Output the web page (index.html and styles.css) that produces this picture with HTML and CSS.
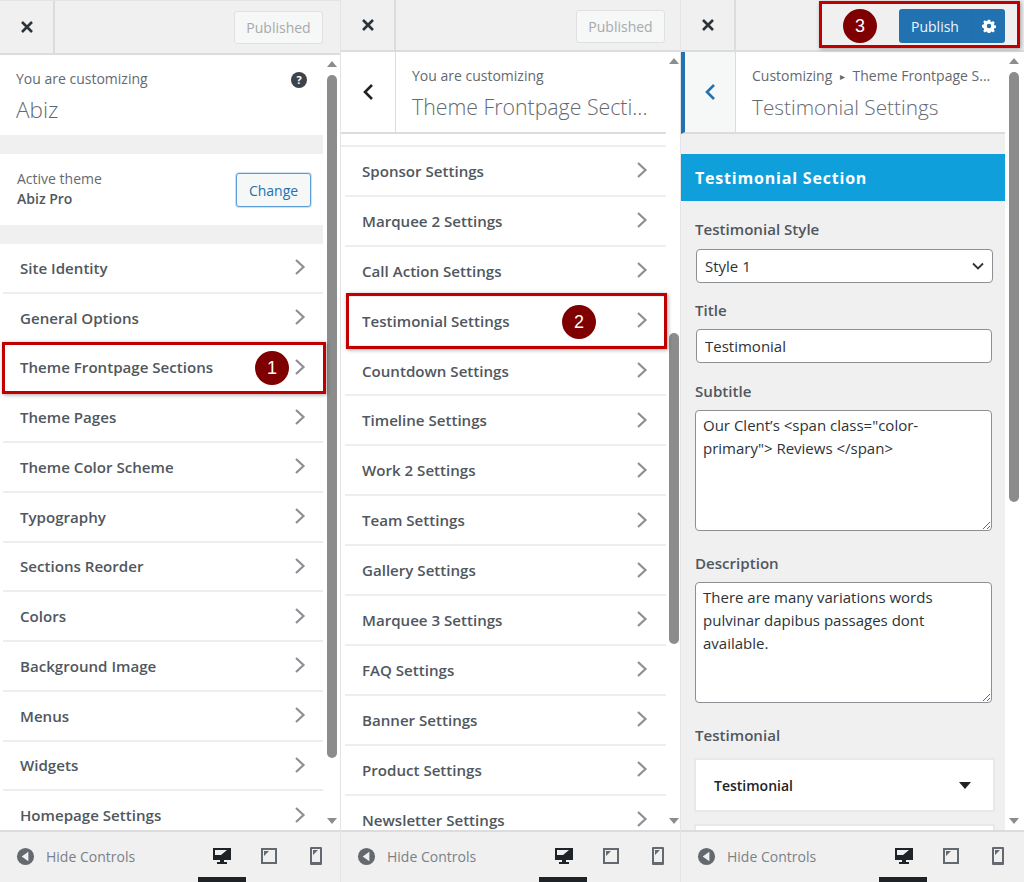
FILE: index.html
```html
<!DOCTYPE html>
<html lang="en">
<head>
<meta charset="utf-8">
<title>Customizer steps</title>
<link rel="stylesheet" href="styles.css">
</head>
<body>
<svg class="defs" width="0" height="0" aria-hidden="true">
  <symbol id="chev" viewBox="0 0 12 18"><path d="M2 2l7.5 7L2 16" fill="none" stroke="currentColor" stroke-width="2.2"/></symbol>
  <symbol id="close" viewBox="0 0 14 14"><path d="M2 2l10 10M12 2L2 12" fill="none" stroke="currentColor" stroke-width="2.6"/></symbol>
  <symbol id="back" viewBox="0 0 12 18"><path d="M10 2L3 9l7 7" fill="none" stroke="currentColor" stroke-width="2.6"/></symbol>
  <symbol id="hide" viewBox="0 0 20 20"><circle cx="10" cy="10" r="9" fill="#646970"/><path d="M13 5v10L6 10z" fill="#f0f0f1"/></symbol>
  <symbol id="desk" viewBox="0 0 20 20"><path d="M1 2h18v12h-7v2h3v2H5v-2h3v-2H1zM3 4v5h6l6-5z" fill="#1d2327" fill-rule="evenodd"/></symbol>
  <symbol id="tablet" viewBox="0 0 20 20"><path d="M2 2h16v16H2zM4 4v12h12V4zM5 5h5l-5 5z" fill="#646970" fill-rule="evenodd"/></symbol>
  <symbol id="phone" viewBox="0 0 20 20"><path d="M5 1h10a1 1 0 0 1 1 1v16a1 1 0 0 1-1 1H5a1 1 0 0 1-1-1V2a1 1 0 0 1 1-1zM6 3v13h8V3zM7 4h5l-5 5z" fill="#646970" fill-rule="evenodd"/></symbol>
</svg>

<main class="shot">
  <section class="panel p1">
    <header class="top">
      <div class="close"><svg class="i-close"><use href="#close"/></svg></div>
      <div class="actions"><span class="published">Published</span></div>
    </header>
    <div class="middle">
      <div class="content">
        <div class="info">
          <div>
            <div class="eyebrow">You are customizing</div>
            <div class="big">Abiz</div>
          </div>
          <span class="help">?</span>
        </div>
        <div class="theme">
          <div>
            <div class="theme-label">Active theme</div>
            <div class="theme-name">Abiz Pro</div>
          </div>
          <span class="change">Change</span>
        </div>
        <ul class="rows rows1">
          <li><span>Site Identity</span><svg class="chev"><use href="#chev"/></svg></li>
          <li><span>General Options</span><svg class="chev"><use href="#chev"/></svg></li>
          <li><span>Theme Frontpage Sections</span><svg class="chev"><use href="#chev"/></svg></li>
          <li><span>Theme Pages</span><svg class="chev"><use href="#chev"/></svg></li>
          <li><span>Theme Color Scheme</span><svg class="chev"><use href="#chev"/></svg></li>
          <li><span>Typography</span><svg class="chev"><use href="#chev"/></svg></li>
          <li><span>Sections Reorder</span><svg class="chev"><use href="#chev"/></svg></li>
          <li><span>Colors</span><svg class="chev"><use href="#chev"/></svg></li>
          <li><span>Background Image</span><svg class="chev"><use href="#chev"/></svg></li>
          <li><span>Menus</span><svg class="chev"><use href="#chev"/></svg></li>
          <li><span>Widgets</span><svg class="chev"><use href="#chev"/></svg></li>
          <li><span>Homepage Settings</span><svg class="chev"><use href="#chev"/></svg></li>
        </ul>
      </div>
      <div class="scrollbar"><i class="up"></i><b class="thumb"></b><i class="down"></i></div>
    </div>
    <footer class="foot">
      <svg class="i-hide"><use href="#hide"/></svg><span class="hide-label">Hide Controls</span>
      <div class="devices">
        <svg class="dev on"><use href="#desk"/></svg>
        <svg class="dev"><use href="#tablet"/></svg>
        <svg class="dev"><use href="#phone"/></svg>
      </div>
    </footer>
  </section>

  <section class="panel p2">
    <header class="top">
      <div class="close"><svg class="i-close"><use href="#close"/></svg></div>
      <div class="actions"><span class="published">Published</span></div>
    </header>
    <div class="middle">
      <div class="content">
        <div class="sub-head">
          <div class="back"><svg class="i-back"><use href="#back"/></svg></div>
          <div class="sub-text">
            <div class="eyebrow">You are customizing</div>
            <div class="big">Theme Frontpage Secti...</div>
          </div>
        </div>
        <ul class="rows rows2">
          <li><span>Sponsor Settings</span><svg class="chev"><use href="#chev"/></svg></li>
          <li><span>Marquee 2 Settings</span><svg class="chev"><use href="#chev"/></svg></li>
          <li><span>Call Action Settings</span><svg class="chev"><use href="#chev"/></svg></li>
          <li><span>Testimonial Settings</span><svg class="chev"><use href="#chev"/></svg></li>
          <li><span>Countdown Settings</span><svg class="chev"><use href="#chev"/></svg></li>
          <li><span>Timeline Settings</span><svg class="chev"><use href="#chev"/></svg></li>
          <li><span>Work 2 Settings</span><svg class="chev"><use href="#chev"/></svg></li>
          <li><span>Team Settings</span><svg class="chev"><use href="#chev"/></svg></li>
          <li><span>Gallery Settings</span><svg class="chev"><use href="#chev"/></svg></li>
          <li><span>Marquee 3 Settings</span><svg class="chev"><use href="#chev"/></svg></li>
          <li><span>FAQ Settings</span><svg class="chev"><use href="#chev"/></svg></li>
          <li><span>Banner Settings</span><svg class="chev"><use href="#chev"/></svg></li>
          <li><span>Product Settings</span><svg class="chev"><use href="#chev"/></svg></li>
          <li><span>Newsletter Settings</span><svg class="chev"><use href="#chev"/></svg></li>
        </ul>
      </div>
      <div class="scrollbar"><i class="up"></i><b class="thumb"></b><i class="down"></i></div>
    </div>
    <footer class="foot">
      <svg class="i-hide"><use href="#hide"/></svg><span class="hide-label">Hide Controls</span>
      <div class="devices">
        <svg class="dev on"><use href="#desk"/></svg>
        <svg class="dev"><use href="#tablet"/></svg>
        <svg class="dev"><use href="#phone"/></svg>
      </div>
    </footer>
  </section>

  <section class="panel p3">
    <header class="top">
      <div class="close"><svg class="i-close"><use href="#close"/></svg></div>
      <div class="actions">
        <span class="publish"><span class="publish-label">Publish</span><span class="publish-gear">
          <svg class="i-gear" viewBox="0 0 20 20"><path fill="#fff" fill-rule="evenodd" d="M8.3 1h3.4l.5 2.5 1.6.7 2.1-1.4 2.4 2.4-1.4 2.1.7 1.6 2.4.5v3.4l-2.4.5-.7 1.6 1.4 2.1-2.4 2.4-2.1-1.4-1.6.7-.5 2.5H8.3l-.5-2.5-1.6-.7-2.1 1.4-2.4-2.4 1.4-2.1-.7-1.6L0 11.7V8.3l2.4-.5.7-1.6-1.4-2.1 2.4-2.4 2.1 1.4 1.6-.7zM10 6.8a3.2 3.2 0 1 0 0 6.4 3.2 3.2 0 0 0 0-6.4z"/></svg>
        </span></span>
      </div>
    </header>
    <div class="middle">
      <div class="content">
        <div class="sub-head accent">
          <div class="back"><svg class="i-back"><use href="#back"/></svg></div>
          <div class="sub-text">
            <div class="eyebrow">Customizing <span class="crumb">▸</span> Theme Frontpage S...</div>
            <div class="big">Testimonial Settings</div>
          </div>
        </div>
        <div class="form">
          <h2 class="band">Testimonial Section</h2>
          <div class="fields">
            <div class="field f-style">
              <label class="lab" for="style">Testimonial Style</label>
              <div class="select-wrap">
                <select id="style" class="ctl select"><option>Style 1</option></select>
                <svg class="select-chev" viewBox="0 0 12 8"><path d="M1 1.5l5 5 5-5" fill="none" stroke="#2c3338" stroke-width="1.8"/></svg>
              </div>
            </div>
            <div class="field f-title">
              <label class="lab" for="title">Title</label>
              <input id="title" class="ctl text" value="Testimonial">
            </div>
            <div class="field f-sub">
              <label class="lab" for="sub">Subtitle</label>
              <textarea id="sub" class="ctl area">Our Clent’s &lt;span class="color-primary"&gt; Reviews &lt;/span&gt;</textarea>
            </div>
            <div class="field f-desc">
              <label class="lab" for="desc">Description</label>
              <textarea id="desc" class="ctl area">There are many variations words pulvinar dapibus passages dont available.</textarea>
            </div>
            <div class="field f-test">
              <div class="lab">Testimonial</div>
              <div class="card"><span>Testimonial</span><i class="card-arrow"></i></div>
              <div class="card card-next"></div>
            </div>
          </div>
        </div>
      </div>
      <div class="scrollbar"><i class="up"></i><b class="thumb"></b><i class="down"></i></div>
    </div>
    <footer class="foot">
      <svg class="i-hide"><use href="#hide"/></svg><span class="hide-label">Hide Controls</span>
      <div class="devices">
        <svg class="dev on"><use href="#desk"/></svg>
        <svg class="dev"><use href="#tablet"/></svg>
        <svg class="dev"><use href="#phone"/></svg>
      </div>
    </footer>
  </section>

  <div class="mark m1"></div><span class="badge b1">1</span>
  <div class="mark m2"></div><span class="badge b2">2</span>
  <div class="mark m3"></div><span class="badge b3">3</span>
</main>
</body>
</html>
```
FILE: styles.css
```css
* { box-sizing: border-box; }
html, body { margin: 0; height: 882px; overflow: hidden; background: #fff; }
body { font-family: "Open Sans", "Noto Sans", sans-serif; color: #50575e; }
.defs { position: absolute; }
ul { list-style: none; margin: 0; padding: 0; }

.shot { position: relative; display: grid; grid-template-columns: 341px 340px 343px; width: 1024px; height: 882px; overflow: hidden; }
.panel { display: flex; flex-direction: column; height: 882px; min-width: 0; border-right: 1px solid #e4e4e6; }
.p3 { border-right: 0; }

.top { display: flex; height: 52px; flex: none; background: #f0f0f1; border-bottom: 2px solid #dcdcde; }
.p1 .top { height: 55px; border-top: 1px solid #e4e4e6; }
.close { width: 55px; display: flex; align-items: center; justify-content: center; border-right: 2px solid #dcdcde; color: #2c3338; }
.i-close { width: 14px; height: 14px; }
.actions { flex: 1; display: flex; align-items: center; justify-content: flex-end; padding: 2px 15px 0 0; }
.p1 .actions { padding: 0 17px 0 0; }
.p3 .actions { padding-right: 19px; }
.published { width: 89px; height: 33px; display: flex; align-items: center; justify-content: center; border: 1px solid #e0e0e2; border-radius: 3px; background: #f6f7f7; color: #a7aaad; font-size: 14px; }
.publish { display: flex; height: 34px; width: 106px; background: #2271b1; border-radius: 3px; color: #f0f6fc; font-size: 14px; }
.publish-label { width: 73px; display: flex; align-items: center; justify-content: center; border-right: 1px solid #2a6cab; }
.publish-gear { flex: 1; display: flex; align-items: center; justify-content: center; }
.i-gear { width: 14px; height: 14px; }

.middle { flex: 1; display: flex; min-height: 0; }
.content { flex: 1; min-width: 0; overflow: hidden; background: #fff; }
.scrollbar { flex: none; width: 17px; position: relative; background: #fff; }
.p2 .scrollbar { width: 14px; }
.p3 .scrollbar { width: 19px; }
.thumb { position: absolute; left: 4px; width: 10px; border-radius: 5px; background: #8c8c8c; }
.p1 .thumb { top: 20px; height: 683px; }
.p2 .thumb { left: 3px; top: 281px; height: 311px; width: 10px; }
.p3 .thumb { top: 20px; height: 430px; }
.up, .down { position: absolute; left: 4px; width: 0; height: 0; border-left: 5px solid transparent; border-right: 5px solid transparent; }
.p2 .up, .p2 .down { left: 3px; }
.up { top: 6px; border-bottom: 6px solid #8c8c8c; }
.down { bottom: 6px; border-top: 6px solid #8c8c8c; }

.eyebrow { font-size: 14px; line-height: 20px; color: #646970; }
.big { font-size: 21.3px; line-height: 28px; font-weight: 300; color: #646970; white-space: nowrap; margin-top: 7px; }
.p1 .big { font-size: 22.5px; }
.p3 .big { font-size: 20.8px; }
.info { height: 80px; padding: 14px 16px 0 16px; display: flex; justify-content: space-between; }
.help { width: 16px; height: 16px; margin-top: 3px; border-radius: 50%; background: #3c434a; color: #fff; font-size: 11px; font-weight: 700; line-height: 16px; text-align: center; }
.theme { height: 90px; padding: 15px 12px 0 17px; display: flex; justify-content: space-between; align-items: flex-start; background: #fff; border-top: 19px solid #f0f0f1; }
.theme-label { font-size: 14px; line-height: 20px; color: #646970; }
.theme-name { font-size: 14px; line-height: 20px; font-weight: 600; color: #50575e; }
.change { width: 75px; height: 34px; margin-top: 4px; display: flex; align-items: center; justify-content: center; border: 1px solid #5b9dd9; border-radius: 3px; background: #f6f7f7; box-shadow: 0 0 0 1px #cfe2f3; color: #2271b1; font-size: 14px; }

.rows { font-size: 15.1px; font-weight: 600; color: #50575e; background: #fff; }
.rows li { display: flex; align-items: center; justify-content: space-between; margin-left: 3px; padding-left: 17px; border-bottom: 2px solid #eeeeef; }
.rows span { white-space: nowrap; }
.chev { width: 12px; height: 18px; color: #8c8f94; margin-top: -1px; }
.rows1 { border-top: 19px solid #f0f0f1; }
.rows1 li { height: 49.76px; padding-right: 17px; }
.rows2 { margin-top: 11px; border-top: 2px solid #eeeeef; }
.rows2 li { height: 49.9px; padding-right: 18px; margin-left: 4px; }

.sub-head { display: flex; height: 82px; border-bottom: 2px solid #dcdcde; background: #fff; }
.back { width: 55px; display: flex; align-items: center; justify-content: center; border-right: 1px solid #dcdcde; color: #1d2327; flex: none; }
.i-back { width: 12px; height: 18px; }
.sub-text { padding: 14px 0 0 16px; min-width: 0; }
.accent { border-left: 4px solid #2271b1; }
.accent .back { width: 51px; background: #f6f7f7; color: #2271b1; }
.crumb { font-size: 10px; margin: 0 4px; vertical-align: 1px; }

.form { background: #f0f0f1; height: 700px; padding-top: 20px; }
.band { margin: 0; height: 47px; display: flex; align-items: center; padding-left: 14px; background: #0f9fdb; color: #fff; font-size: 16px; font-weight: 700; letter-spacing: 0.8px; }
.fields { padding: 0 13px 0 14px; }
.field { display: flex; flex-direction: column; }
.lab { font-size: 15.1px; line-height: 20px; font-weight: 600; color: #50575e; }
.f-style { padding-top: 18px; }
.f-style .lab { margin-bottom: 10px; }
.f-title { padding-top: 17px; }
.f-title .lab { margin-bottom: 9px; }
.f-sub { padding-top: 18px; }
.f-sub .lab { margin-bottom: 9px; }
.f-desc { padding-top: 22px; }
.f-desc .lab { margin-bottom: 9px; }
.f-test { padding-top: 22px; }
.f-test .lab { margin-bottom: 15px; }
.ctl { width: 297px; font-family: inherit; font-size: 15px; color: #2c3338; background: #fff; border: 1px solid #8c8f94; border-radius: 4px; margin: 0; outline: 0; }
.select-wrap { position: relative; width: 297px; margin-left: 1px; }
.select { width: 297px; height: 34px; padding: 0 24px 0 8px; appearance: none; display: block; }
.select-chev { position: absolute; right: 9px; top: 13px; width: 12px; height: 8px; }
.text { height: 34px; padding: 0 8px; margin-left: 1px; width: 296px; }
.area { height: 121px; padding: 3px 7px; line-height: 23px; display: block; resize: vertical; }
.card { width: 297px; height: 50px; margin-left: 1px; padding: 0 22px 0 18px; display: flex; align-items: center; justify-content: space-between; background: #fff; box-shadow: 0 0 0 2px #e8e8e9; font-size: 14px; font-weight: 600; color: #1d2327; }
.card-arrow { width: 0; height: 0; border-left: 6px solid transparent; border-right: 6px solid transparent; border-top: 7px solid #1d2327; }
.card-next { margin-top: 16px; }

.foot { position: relative; flex: none; height: 52px; display: flex; align-items: center; padding: 0 14px 2px 16px; background: #f0f0f1; border-top: 2px solid #dcdcde; }
.p2 .foot { padding-right: 12px; }
.p3 .foot { padding-right: 16px; }
.i-hide { width: 19px; height: 19px; margin-right: 11px; }
.hide-label { font-size: 14px; color: #7b8086; }
.devices { margin-left: auto; display: flex; gap: 27px; }
.dev { width: 20px; height: 20px; }
.foot::after { content: ""; position: absolute; left: 198px; bottom: 0; width: 48px; height: 5px; background: #1d2327; }

.mark { position: absolute; border: 3px solid #c00000; box-shadow: 1px 1px 4px rgba(0, 0, 0, .35); }
.m1 { left: 2px; top: 342px; width: 324px; height: 52px; }
.m2 { left: 346px; top: 293px; width: 321px; height: 56px; }
.m3 { left: 819px; top: 1px; width: 201px; height: 47px; }
.badge { position: absolute; width: 34px; height: 34px; border-radius: 50%; background: #7f0000; color: #fff; font-family: "Liberation Sans", sans-serif; font-size: 18px; line-height: 34px; text-align: center; }
.b1 { left: 255px; top: 351px; }
.b2 { left: 562px; top: 305px; }
.b3 { left: 843px; top: 9px; }
```
